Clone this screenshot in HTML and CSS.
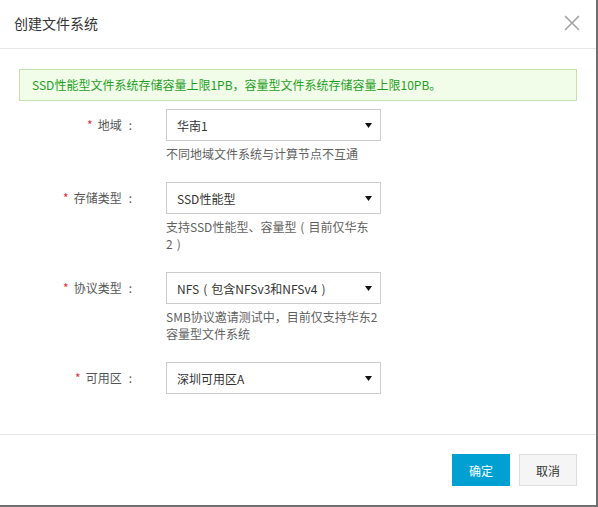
FILE: index.html
```html
<!DOCTYPE html>
<html lang="zh-CN">
<head>
<meta charset="utf-8">
<title>创建文件系统</title>
<link rel="stylesheet" href="styles.css">
</head>
<body>
<div class="dialog">
  <div class="header">
    <div class="title">创建文件系统</div>
    <svg class="close" width="16" height="16" viewBox="0 0 16 16"><path d="M1 1L15 15M15 1L1 15" stroke="#a3a3a3" stroke-width="1.6" fill="none"/></svg>
  </div>
  <div class="content">
    <div class="notice">SSD性能型文件系统存储容量上限1PB<span class="punct">，</span>容量型文件系统存储容量上限10PB。</div>
    <div class="form">
      <div class="item">
        <div class="label"><span class="req">*</span>地域<span class="colon">:</span></div>
        <div class="select"><span>华南1</span><svg class="arrow" width="7" height="5" viewBox="0 0 7 5"><path d="M0 0H7L3.5 5Z" fill="#111"/></svg></div>
        <div class="help">不同地域文件系统与计算节点不互通</div>
      </div>
      <div class="item">
        <div class="label"><span class="req">*</span>存储类型<span class="colon">:</span></div>
        <div class="select"><span>SSD性能型</span><svg class="arrow" width="7" height="5" viewBox="0 0 7 5"><path d="M0 0H7L3.5 5Z" fill="#111"/></svg></div>
        <div class="help">支持SSD性能型、容量型<span class="paren">(</span>目前仅华东<br>2<span class="paren">)</span></div>
      </div>
      <div class="item">
        <div class="label"><span class="req">*</span>协议类型<span class="colon">:</span></div>
        <div class="select"><span>NFS<span class="paren">(</span>包含NFSv3和NFSv4<span class="paren">)</span></span><svg class="arrow" width="7" height="5" viewBox="0 0 7 5"><path d="M0 0H7L3.5 5Z" fill="#111"/></svg></div>
        <div class="help">SMB协议邀请测试中<span class="punct">，</span>目前仅支持华东2<br>容量型文件系统</div>
      </div>
      <div class="item">
        <div class="label"><span class="req">*</span>可用区<span class="colon">:</span></div>
        <div class="select"><span>深圳可用区A</span><svg class="arrow" width="7" height="5" viewBox="0 0 7 5"><path d="M0 0H7L3.5 5Z" fill="#111"/></svg></div>
      </div>
    </div>
  </div>
  <div class="footer">
    <button class="btn primary">确定</button>
    <button class="btn">取消</button>
  </div>
</div>
</body>
</html>
```

FILE: styles.css
```css
html, body {
  margin: 0;
  padding: 0;
  background: #fff;
}
body {
  font-family: "Noto Sans CJK SC", "Microsoft YaHei", sans-serif;
  font-size: 12px;
  color: #333;
}
.dialog {
  width: 598px;
  height: 507px;
  box-sizing: border-box;
  border-right: 2px solid #6f6f6f;
  border-bottom: 2px solid #6f6f6f;
  display: flex;
  flex-direction: column;
  background: #fff;
}
.header {
  border-bottom: 1px solid #e5e5e5;
  display: flex;
  align-items: center;
  justify-content: space-between;
  padding: 0 16px 2px 14px;
  box-sizing: content-box;
  flex: none;
  height: 46px;
}
.title {
  font-size: 14px;
  color: #333;
  line-height: 20px;
}
.close {
  display: block;
}
.content {
  flex: 1;
  padding: 20px 19px 0 19px;
}
.notice {
  height: 30px;
  line-height: 30px;
  border: 1px solid #c4e2b0;
  background: #f1fce9;
  color: #1f9f1f;
  padding: 0 12px;
}
.punct {
  font-family: "Noto Sans CJK TC", "Noto Sans CJK SC", sans-serif;
}
.paren {
  display: inline-block;
  width: 12px;
  text-align: center;
}
.form {
  margin-top: 8px;
}
.item {
  display: grid;
  grid-template-columns: 113px 215px;
  column-gap: 34px;
  margin-bottom: 20px;
}
.label {
  grid-column: 1;
  height: 32px;
  line-height: 32px;
  text-align: right;
  color: #555;
  white-space: nowrap;
}
.req {
  color: #e5323a;
  margin-right: 5px;
}
.colon {
  margin-left: 7px;
}
.select {
  grid-column: 2;
  height: 32px;
  box-sizing: border-box;
  border: 1px solid #cccccc;
  display: flex;
  align-items: center;
  justify-content: space-between;
  padding: 0 8px 0 10px;
  color: #333;
  background: #fff;
}
.arrow {
  display: block;
}
.help {
  grid-column: 2;
  margin-top: 4px;
  line-height: 17px;
  color: #5f5f5f;
  white-space: nowrap;
}
.footer {
  flex: none;
  border-top: 1px solid #e5e5e5;
  padding: 19px 19px 19px 0;
  display: flex;
  justify-content: flex-end;
  gap: 9px;
}
.btn {
  width: 58px;
  height: 32px;
  box-sizing: border-box;
  border: 1px solid #dddddd;
  background: #f5f5f5;
  color: #333;
  font-family: inherit;
  font-size: 12px;
  padding: 0;
  margin: 0;
}
.btn.primary {
  background: #00a0d2;
  border-color: #00a0d2;
  color: #fff;
}
```
